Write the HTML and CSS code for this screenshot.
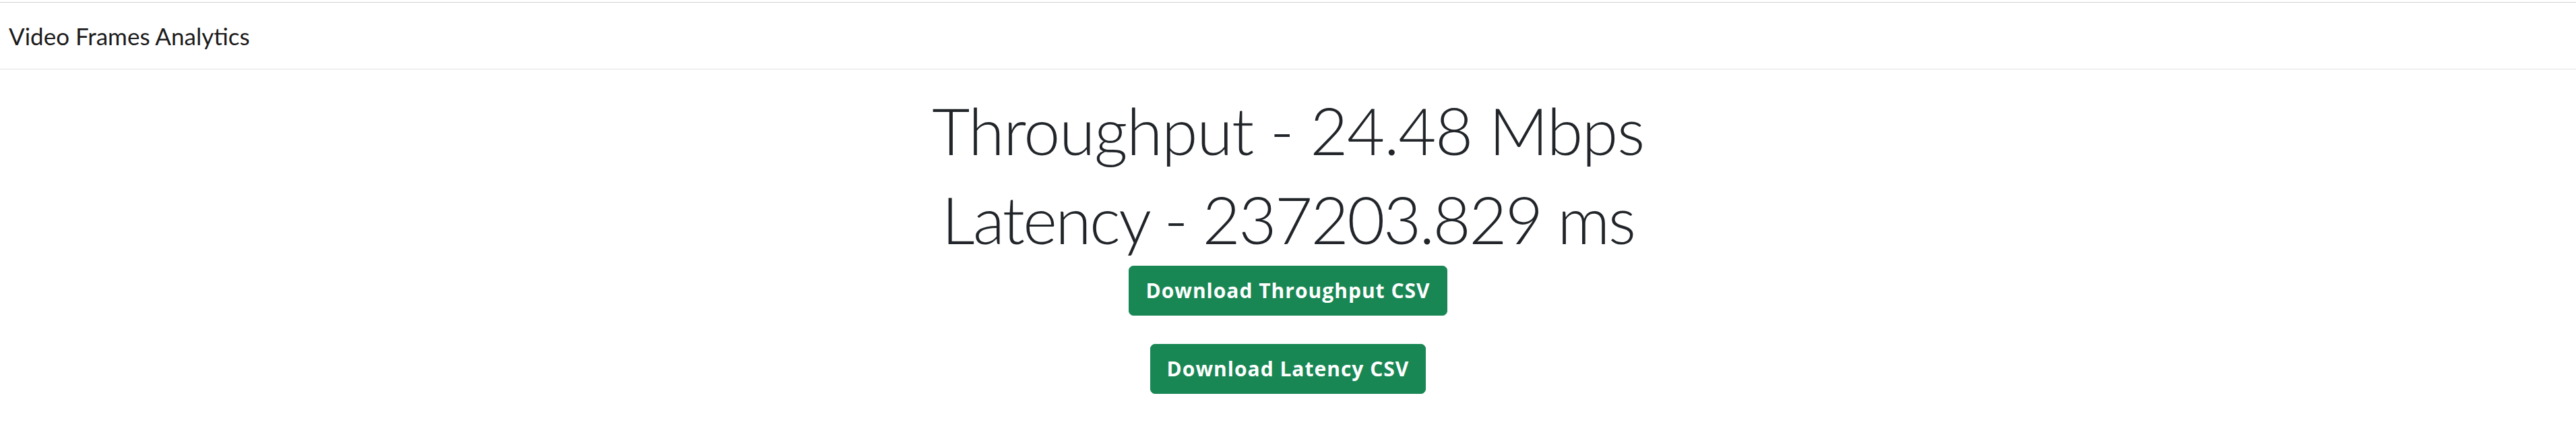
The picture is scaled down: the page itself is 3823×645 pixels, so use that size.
FILE: index.html
```html
<!DOCTYPE html>
<html lang="en">
<head>
<meta charset="utf-8">
<title>Video Frames Analytics</title>
<link rel="stylesheet" href="styles.css">
</head>
<body>
<div class="page">
  <nav class="navbar">
    <span class="brand">Video Frames Analytics</span>
  </nav>
  <main class="content">
    <h1 class="metric">Throughput - 24.48 Mbps</h1>
    <h1 class="metric metric-last">Latency - 237203.829 ms</h1>
    <div class="actions">
      <a class="btn" href="#">Download Throughput CSV</a>
      <a class="btn" href="#">Download Latency CSV</a>
    </div>
  </main>
</div>
</body>
</html>
```
FILE: styles.css
```css
html, body {
  margin: 0;
  padding: 0;
  background: #ffffff;
}

body {
  font-family: Lato, "Liberation Sans", sans-serif;
  color: #212529;
}

.page {
  margin-top: 3px;
  border-top: 1px solid #d2d2d2;
}

.navbar {
  display: flex;
  align-items: center;
  padding: 23px 13px 23px;
  border-bottom: 1px solid #dee2e6;
}

.brand {
  font-size: 35px;
  line-height: 52px;
  font-weight: 400;
  color: #1c1c1c;
}

.content {
  display: flex;
  flex-direction: column;
  align-items: center;
  padding-top: 31px;
}

.metric {
  margin: 0 0 15px;
  font-size: 97px;
  line-height: 117px;
  font-weight: 300;
  letter-spacing: -1.4px;
  color: #212529;
}

.metric-last {
  margin-bottom: 11px;
  letter-spacing: -2.6px;
}

.actions {
  display: flex;
  flex-direction: column;
  align-items: center;
  gap: 42px;
}

.btn {
  display: inline-block;
  padding: 15px 24px;
  font-family: "Open Sans", Lato, sans-serif;
  font-size: 30px;
  line-height: 42px;
  font-weight: 700;
  letter-spacing: 1px;
  color: #ffffff;
  background: #198754;
  border: 1px solid #198754;
  border-radius: 7px;
  text-decoration: none;
}
```
